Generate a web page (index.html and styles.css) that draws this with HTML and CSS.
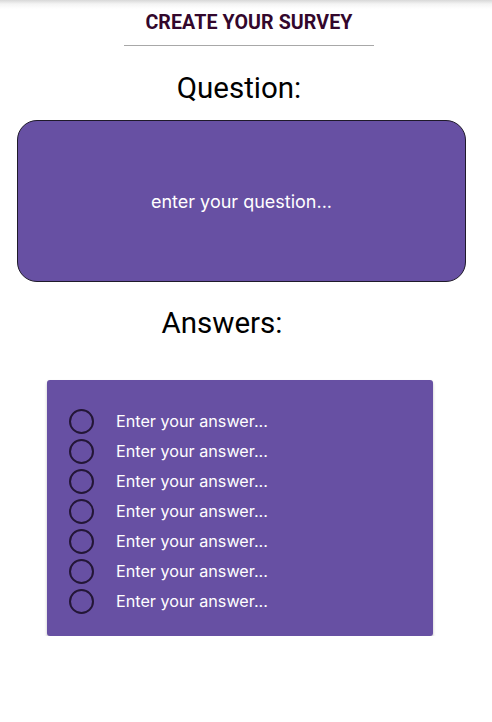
FILE: index.html
```html
<!DOCTYPE html>
<html>
<head>
<meta charset="utf-8">
<link rel="stylesheet" href="styles.css">
</head>
<body>
<header class="topbar">
  <h1 class="title">CREATE YOUR SURVEY</h1>
  <div class="rule"></div>
</header>
<main class="page">
  <h2 class="label q-label">Question:</h2>
  <div class="question-box">enter your question...</div>
  <h2 class="label a-label">Answers:</h2>
  <div class="answers">
    <div class="answer"><span class="radio"></span><span class="atext">Enter your answer...</span></div>
    <div class="answer"><span class="radio"></span><span class="atext">Enter your answer...</span></div>
    <div class="answer"><span class="radio"></span><span class="atext">Enter your answer...</span></div>
    <div class="answer"><span class="radio"></span><span class="atext">Enter your answer...</span></div>
    <div class="answer"><span class="radio"></span><span class="atext">Enter your answer...</span></div>
    <div class="answer"><span class="radio"></span><span class="atext">Enter your answer...</span></div>
    <div class="answer"><span class="radio"></span><span class="atext">Enter your answer...</span></div>
  </div>
</main>
</body>
</html>
```
FILE: styles.css
```css
* { box-sizing: border-box; }
html, body { margin: 0; padding: 0; background: #fff; }
body { font-family: Roboto, "Liberation Sans", sans-serif; width: 492px; }
.topbar {
  display: flex;
  flex-direction: column;
  align-items: center;
  padding-top: 12px;
  background: linear-gradient(to bottom, #d8d8d8 0px, #f4f4f4 4px, #ffffff 9px);
}
.title {
  margin: 0;
  font-size: 19.6px;
  font-weight: 700;
  color: #33072c;
  line-height: 22px;
  letter-spacing: 0.1px;
  margin-left: 6px;
}
.rule {
  margin-top: 11px;
  width: 250px;
  height: 1px;
  background: #a8a8a8;
  margin-left: 6px;
}
.page { display: flex; flex-direction: column; }
.label {
  margin: 0;
  font-weight: 400;
  font-size: 29.5px;
  line-height: 34px;
  color: #000;
  text-align: center;
}
.q-label { margin-top: 25px; margin-left: -14px; }
.question-box {
  margin: 15px 0 0 17px;
  width: 449px;
  height: 162px;
  background: #6750a3;
  border: 1px solid #1f1a2a;
  border-radius: 20px;
  display: flex;
  align-items: center;
  justify-content: center;
  color: #fff;
  font-family: Inter, "Noto Sans", sans-serif;
  font-size: 18px;
}
.a-label { margin-top: 24px; margin-left: -48px; }
.answers {
  margin: 40px 0 0 47px;
  width: 386px;
  height: 256px;
  background: #6750a3;
  border-radius: 3px;
  box-shadow: 0 2px 3px rgba(0,0,0,0.25);
  padding: 26px 0 0 22px;
  display: flex;
  flex-direction: column;
}
.answer {
  display: flex;
  align-items: center;
  height: 30px;
}
.radio {
  width: 25px;
  height: 25px;
  border: 2.5px solid #231636;
  border-radius: 50%;
  flex: none;
}
.atext {
  margin-left: 22px;
  color: #fff;
  font-family: Inter, "Noto Sans", sans-serif;
  font-size: 16.2px;
}
```
